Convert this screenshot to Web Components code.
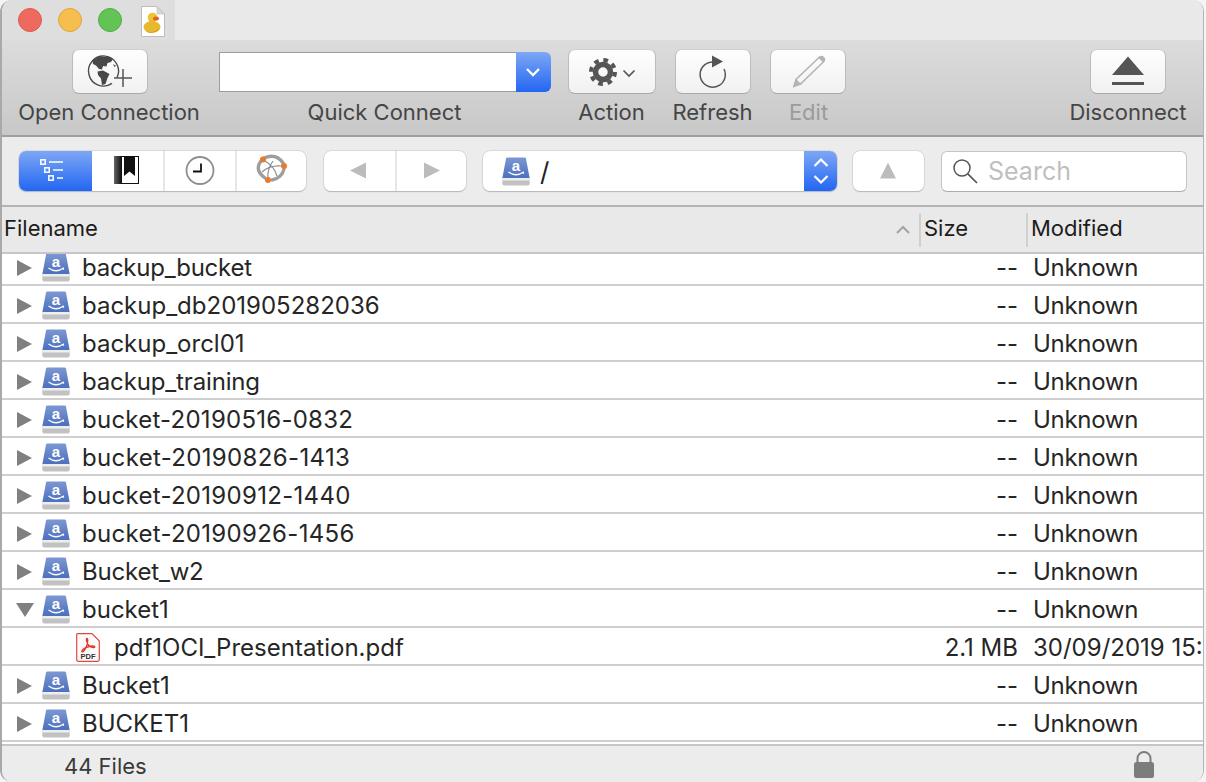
<!DOCTYPE html>
<html>
<head>
<meta charset="utf-8">
<title>Cyberduck</title>
<style>
  html, body { margin: 0; padding: 0; background: #f4f4f6; height: 100%; overflow: hidden; }
</style>
</head>
<body>
<app-window>
  <title-bar></title-bar>
  <tool-bar>
    <tool-item label="Open Connection" style="width:181px"><tool-button style="width:76px;margin-left:2px"><app-icon name="globe" size="76 44"></app-icon></tool-button></tool-item>
    <tool-item label="Quick Connect" style="width:332px;margin-left:19px"><quick-connect></quick-connect></tool-item>
    <tool-item label="Action" style="width:88px;margin-left:17px"><tool-button style="width:88px"><app-icon name="gear" size="88 44"></app-icon></tool-button></tool-item>
    <tool-item label="Refresh" style="width:80px;margin-left:17px"><tool-button style="width:76px"><app-icon name="refresh" size="76 44"></app-icon></tool-button></tool-item>
    <tool-item label="Edit" disabled style="width:76px;margin-left:18px"><tool-button style="width:76px;margin-left:-1px"><app-icon name="pencil" size="76 44"></app-icon></tool-button></tool-item>
    <tool-item label="Disconnect" style="width:118px;margin-left:auto"><tool-button style="width:76px"><app-icon name="eject" size="76 44"></app-icon></tool-button></tool-item>
  </tool-bar>
  <nav-bar>
    <seg-group style="width:287px">
      <seg-item active><app-icon name="list" size="73 39"></app-icon></seg-item>
      <seg-item nosep><app-icon name="bookmark" size="71 39"></app-icon></seg-item>
      <seg-item><app-icon name="clock" size="72 39"></app-icon></seg-item>
      <seg-item><app-icon name="bonjour" size="71 39"></app-icon></seg-item>
    </seg-group>
    <seg-group style="width:142px;margin-left:18px">
      <seg-item nosep><app-icon name="back" size="71 39"></app-icon></seg-item>
      <seg-item><app-icon name="forward" size="71 39"></app-icon></seg-item>
    </seg-group>
    <path-select style="margin-left:17px">/</path-select>
    <seg-group style="width:71px;margin-left:16px">
      <seg-item nosep><app-icon name="up" size="71 39"></app-icon></seg-item>
    </seg-group>
    <search-field style="margin-left:17px">Search</search-field>
  </nav-bar>
  <list-header></list-header>
  <file-list>
    <file-row clipped size="--" modified="Unknown" style="--track:-.25px">backup_bucket</file-row>
    <file-row size="--" modified="Unknown">backup_db201905282036</file-row>
    <file-row size="--" modified="Unknown">backup_orcl01</file-row>
    <file-row size="--" modified="Unknown" style="--track:-.15px">backup_training</file-row>
    <file-row size="--" modified="Unknown" style="--track:.25px">bucket-20190516-0832</file-row>
    <file-row size="--" modified="Unknown" style="--track:.35px">bucket-20190826-1413</file-row>
    <file-row size="--" modified="Unknown" style="--track:.3px">bucket-20190912-1440</file-row>
    <file-row size="--" modified="Unknown" style="--track:.3px">bucket-20190926-1456</file-row>
    <file-row size="--" modified="Unknown" style="--track:-.2px">Bucket_w2</file-row>
    <file-row size="--" modified="Unknown" open>bucket1</file-row>
    <file-row size="2.1 MB" modified="30/09/2019 15:17" kind="pdf">pdf1OCI_Presentation.pdf</file-row>
    <file-row size="--" modified="Unknown">Bucket1</file-row>
    <file-row size="--" modified="Unknown">BUCKET1</file-row>
  </file-list>
  <status-bar>44 Files</status-bar>
</app-window>

<script>
const FONT = `Inter, "Noto Sans", "Liberation Sans", sans-serif`;

// disk drawn at 28x29, shared by the rows and the path field
const diskSvg = `
  <svg width="28" height="29" viewBox="0 0 28 29">
    <defs><linearGradient id="dk" x1="0" y1="0" x2="0" y2="1">
      <stop offset="0" stop-color="#7d97d2"/><stop offset="1" stop-color="#4c70bd"/>
    </linearGradient></defs>
    <path d="M4 1.5Q4.200 .5 5.500 .5H22.500Q23.800 .5 24 1.500L27.600 21H.4Z" fill="url(#dk)"/>
    <path d="M.3 21H27.700V26.500Q27.700 28.500 25.700 28.500H2.300Q.3 28.500 .3 26.500Z" fill="#c2c2c2"/>
    <rect x=".3" y="21" width="27.400" height="2.500" fill="#eeeeee"/>
    <text x="14" y="13.500" text-anchor="middle" font-family="Liberation Sans" font-weight="bold" font-size="15" fill="#fff">a</text>
    <path d="M6.500 15Q14 20.500 21.500 15" fill="none" stroke="#fff" stroke-width="1.300"/>
    <path d="M21.800 14.200L22.200 17L19.800 16Z" fill="#fff"/>
  </svg>`;

const pdfSvg = `
  <svg width="24" height="29" viewBox="0 0 24 29">
    <path d="M1.500 .7H16L23.300 8V26.500Q23.300 28.300 21.500 28.300H2.500Q.7 28.300 .7 26.500V1.500Q.7 .7 1.500 .7Z" fill="#fafafa" stroke="#e5473c" stroke-width="1.200"/>
    <path d="M11 5.500C9.800 5.500 10.500 9.500 12.800 12.500C14.200 14.400 18.600 15.300 18.800 13.900C19 12.500 14 12.800 10.500 14.300C7.500 15.500 5 18 6 18.800C7.200 19.600 9.800 15.500 11 12C11.900 9.300 12 5.500 11 5.500Z" fill="none" stroke="#e5352b" stroke-width="1.300"/>
    <text x="12" y="26" text-anchor="middle" font-family="Liberation Sans" font-weight="bold" font-size="7.500" fill="#333">PDF</text>
  </svg>`;

// toolbar and navigation glyphs, each viewBox is the button box
const ICONS = {
  globe: `
    <path d="M40 34.400A15 15 0 1 1 45 28.600" fill="none" stroke="#4a4a4a" stroke-width="1.400"/>
    <path d="M20.500 11L27 8L38 8L41 10L39 13L35.500 14L34.500 17.500L31 17L30 20.500L27 20L24 16.500L21 15Z" fill="#484848"/>
    <path d="M25.500 22.500L31 21.500L37.500 25L35.500 29L33.500 35L30 36L29 29.500L26 26Z" fill="#484848"/>
    <path d="M41 15L44 16.500L42.500 18.500Z" fill="#6a6a6a"/>
    <path d="M51 20V38M42 29H60" stroke="#555" stroke-width="1.500" fill="none"/>`,
  gear: `
    <circle cx="35" cy="23" r="12" fill="none" stroke="#555" stroke-width="4" stroke-dasharray="4.700 4.725"/>
    <circle cx="35" cy="23" r="7.500" fill="none" stroke="#555" stroke-width="5.500"/>
    <path d="M55.500 21.500L61 27L66.500 21.500" fill="none" stroke="#555" stroke-width="1.700"/>`,
  refresh: `
    <path d="M37 13A12.600 12.600 0 1 0 49 20" fill="none" stroke="#555" stroke-width="1.500"/>
    <path d="M37 6.500L48 12.500L37 18.500Z" fill="#555"/>`,
  pencil: `
    <path d="M24 37.500L26.500 30L49 8.500Q51.500 6.500 53.500 8.500Q55.500 10.500 53.500 12.800L31 34.500Z" fill="none" stroke="#b4b4b4" stroke-width="1.500"/>
    <path d="M23 38L25.500 29.500L31.500 35.500Z" fill="#b4b4b4"/>
    <path d="M48.500 9Q51.500 6 53.800 8.200Q56 10.500 53.200 13.500Z" fill="#b4b4b4"/>`,
  eject: `
    <path d="M22 26L38 7.500L54 26Z" fill="#555"/>
    <rect x="22" y="33" width="32" height="3" fill="#555"/>`,
  list: `
    <g fill="none" stroke="#fff" stroke-width="1.500"><rect x="21.800" y="8.800" width="4.400" height="4.400"/><rect x="25.800" y="16.800" width="4.400" height="4.400"/><rect x="29.800" y="24.800" width="4.400" height="4.400"/></g>
    <path d="M30 11H44M34 19H44M38 27H44" stroke="#fff" stroke-width="1.700"/>`,
  bookmark: `
    <defs><linearGradient id="bm"><stop offset="0" stop-color="#666"/><stop offset=".3" stop-color="#111"/></linearGradient></defs>
    <rect x="22" y="5" width="25" height="28" fill="url(#bm)"/>
    <rect x="30" y="6" width="16" height="26" fill="#fff"/>
    <path d="M32 5H43V25L37.500 20.500L32 25Z" fill="#111"/>`,
  clock: `
    <circle cx="37" cy="19.500" r="13.500" fill="#fff" stroke="#8f8f8f" stroke-width="1.800"/>
    <path d="M38 12.500V20.500H30" fill="none" stroke="#111" stroke-width="1.800"/>`,
  bonjour: `
    <g fill="none" stroke="#9e9e9e" stroke-width="3.400" stroke-linecap="round">
      <path d="M29 7Q41 2 48 12"/>
      <path d="M49 18Q47 27 37 29"/>
      <path d="M30 27Q19 19 26 10"/>
    </g>
    <g fill="none" stroke="#8c8c8c" stroke-width="1.200">
      <path d="M30 10Q39 15 42 25"/>
      <path d="M46 15Q35 14 27 21"/>
      <path d="M33 27Q32 18 38 10"/>
    </g>
    <circle cx="28" cy="8.500" r="3" fill="#ea7a2e"/>
    <circle cx="49" cy="15" r="3" fill="#ea7a2e"/>
    <circle cx="33" cy="29" r="3" fill="#ea7a2e"/>`,
  back: `<path d="M26 19.500L42 11.500V27.500Z" fill="#bcbcbc"/>`,
  forward: `<path d="M29 11.500L45 19.500L29 27.500Z" fill="#bcbcbc"/>`,
  up: `<path d="M27 27.500L35 11.500L43 27.500Z" fill="#bcbcbc"/>`
};

class AppIcon extends HTMLElement {
  connectedCallback() {
    const [w, h] = this.getAttribute('size').split(' ');
    const root = this.shadowRoot || this.attachShadow({ mode: 'open' });
    root.innerHTML = `
      <style>:host { display: block; width: ${w}px; height: ${h}px; } svg { display: block; }</style>
      <svg width="${w}" height="${h}" viewBox="0 0 ${w} ${h}">${ICONS[this.getAttribute('name')]}</svg>`;
  }
}

class AppWindow extends HTMLElement {
  constructor() {
    super();
    this.attachShadow({ mode: 'open' }).innerHTML = `
      <style>
        :host {
          display: flex; flex-direction: column; box-sizing: border-box;
          width: 1204px; height: 782px; overflow: hidden;
          background: #fff; border-left: 2px solid #a9a9a9; border-right: 1px solid #b4b4b4;
          border-radius: 12px;
          font-family: ${FONT};
        }
      </style>
      <slot></slot>`;
  }
}

class TitleBar extends HTMLElement {
  constructor() {
    super();
    this.attachShadow({ mode: 'open' }).innerHTML = `
      <style>
        :host { display: flex; height: 40px; flex: none; background: #e9e9e9; }
        .tab { width: 173px; display: flex; align-items: center; background: #dedede; padding-left: 16px; box-sizing: border-box; }
        .light { width: 24px; height: 24px; border-radius: 50%; box-sizing: border-box; margin-right: 16px; }
        .red { background: #ee6a5f; border: 1px solid #dc5a50; }
        .yellow { background: #f6bd4f; border: 1px solid #dfa53d; }
        .green { background: #61c454; border: 1px solid #50ad44; }
        svg { display: block; margin-left: 3px; align-self: flex-start; margin-top: 6px; }
      </style>
      <div class="tab">
        <div class="light red"></div><div class="light yellow"></div><div class="light green"></div>
        <svg width="24" height="31" viewBox="0 0 24 31">
          <path d="M.5 .5H16L23.500 8V30.500H.5Z" fill="#fff" stroke="#bdbdbd"/>
          <path d="M16 .5V8H23.500Z" fill="#d8d8d8" stroke="#bdbdbd" stroke-width=".6"/>
          <ellipse cx="11" cy="21" rx="8.500" ry="6" fill="#e8b92e"/>
          <path d="M4 24.500Q11 29 19 22Q15 27.500 7 26.500Z" fill="#b98a1a"/>
          <circle cx="11.500" cy="11.500" r="4.800" fill="#efc433"/>
          <rect x="8" y="14" width="6" height="5" fill="#e8b92e"/>
          <ellipse cx="15" cy="12.500" rx="3" ry="2" fill="#e2632a"/>
        </svg>
      </div>`;
  }
}

class ToolBar extends HTMLElement {
  constructor() {
    super();
    this.attachShadow({ mode: 'open' }).innerHTML = `
      <style>
        :host {
          display: flex; flex: none; height: 97px; box-sizing: border-box;
          padding: 9px 16px 0 16.500px;
          background: linear-gradient(#dcdcdc, #c8c8c8);
          border-bottom: 2px solid #9f9f9f;
        }
      </style>
      <slot></slot>`;
  }
}

class ToolItem extends HTMLElement {
  connectedCallback() {
    const off = this.hasAttribute('disabled');
    this.attachShadow({ mode: 'open' }).innerHTML = `
      <style>
        :host { display: flex; flex-direction: column; align-items: center; flex: none; }
        .box { height: 45px; display: flex; align-items: center; }
        .label { margin-top: 4px; font-size: 22px; line-height: 28px; white-space: nowrap; color: ${off ? '#9b9b9b' : '#454545'}; }
      </style>
      <div class="box"><slot></slot></div>
      <div class="label">${this.getAttribute('label')}</div>`;
  }
}

class ToolButton extends HTMLElement {
  constructor() {
    super();
    this.attachShadow({ mode: 'open' }).innerHTML = `
      <style>
        :host {
          display: block; height: 45px; box-sizing: border-box;
          background: linear-gradient(#fefefe, #f1f1f1);
          border-radius: 7px; border: 1px solid #bcbcbc; border-top-color: #cfcfcf; border-bottom-color: #a9a9a9;
        }
        ::slotted(app-icon) { margin: -1px; }
      </style>
      <slot></slot>`;
  }
}

class QuickConnect extends HTMLElement {
  constructor() {
    super();
    this.attachShadow({ mode: 'open' }).innerHTML = `
      <style>
        :host { display: flex; width: 332px; height: 40px; }
        .field { flex: 1; background: #fff; border: 1px solid #9c9c9c; border-right: 0; }
        .drop { width: 35px; background: linear-gradient(#7ea7f5, #2266f2); border-radius: 0 6px 6px 0; display: flex; align-items: center; justify-content: center; }
      </style>
      <div class="field"></div>
      <div class="drop"><svg width="16" height="10" viewBox="0 0 16 10"><path d="M2 2L8 8L14 2" fill="none" stroke="#fff" stroke-width="2.300"/></svg></div>`;
  }
}

class NavBar extends HTMLElement {
  constructor() {
    super();
    this.attachShadow({ mode: 'open' }).innerHTML = `
      <style>
        :host {
          display: flex; align-items: center; flex: none; height: 70px; box-sizing: border-box;
          padding: 0 16px 0 17px; background: #ececec; border-bottom: 2px solid #b4b4b4;
        }
      </style>
      <slot></slot>`;
  }
}

class SegGroup extends HTMLElement {
  constructor() {
    super();
    this.attachShadow({ mode: 'open' }).innerHTML = `
      <style>
        :host {
          display: flex; flex: none; height: 40px; box-sizing: border-box; overflow: hidden;
          background: #fff; border-radius: 7px;
          box-shadow: 0 0 0 .5px #c6c6c6, 0 1px 1px #aaa;
        }
      </style>
      <slot></slot>`;
  }
}

class SegItem extends HTMLElement {
  constructor() {
    super();
    this.attachShadow({ mode: 'open' }).innerHTML = `
      <style>
        :host { display: block; height: 40px; flex: none; box-shadow: inset 2px 0 #e6e6e6; }
        :host([nosep]) { box-shadow: none; }
        :host([active]) { box-shadow: none; background: linear-gradient(#7ea7f5, #2266f2); }
      </style>
      <slot></slot>`;
  }
}

class PathSelect extends HTMLElement {
  constructor() {
    super();
    this.attachShadow({ mode: 'open' }).innerHTML = `
      <style>
        :host {
          display: flex; align-items: center; flex: none; width: 354px; height: 40px; box-sizing: border-box;
          background: #fff; border-radius: 7px; overflow: hidden;
          box-shadow: 0 0 0 .5px #c6c6c6, 0 1px 1px #aaa;
        }
        .disk { margin-left: 19px; height: 29px; }
        .text { flex: 1; margin-left: 10px; font-size: 26px; color: #222; }
        .step { width: 33px; height: 40px; background: linear-gradient(#7ea7f5, #2266f2); display: flex; align-items: center; justify-content: center; }
      </style>
      <div class="disk">${diskSvg}</div>
      <div class="text"><slot></slot></div>
      <div class="step"><svg width="18" height="30" viewBox="0 0 18 30"><path d="M2.500 10L9 3.500L15.500 10M2.500 20L9 26.500L15.500 20" fill="none" stroke="#fff" stroke-width="2.200"/></svg></div>`;
  }
}

class SearchField extends HTMLElement {
  constructor() {
    super();
    this.attachShadow({ mode: 'open' }).innerHTML = `
      <style>
        :host {
          display: flex; align-items: center; flex: none; width: 246px; height: 41px; box-sizing: border-box;
          background: #fff; border-radius: 6px; border: 1px solid #c4c4c4; border-bottom-color: #adadad;
          color: #bfbfbf; font-size: 25px;
        }
        svg { margin-left: 10px; margin-right: 10px; display: block; }
      </style>
      <svg width="26" height="26" viewBox="0 0 26 26"><circle cx="10" cy="10" r="8" fill="none" stroke="#555" stroke-width="1.500"/><path d="M15.800 15.800L25 25" stroke="#555" stroke-width="1.700"/></svg>
      <slot></slot>`;
  }
}

class ListHeader extends HTMLElement {
  constructor() {
    super();
    this.attachShadow({ mode: 'open' }).innerHTML = `
      <style>
        :host {
          display: flex; align-items: center; flex: none; height: 47px; box-sizing: border-box;
          background: #e9e9e9; border-bottom: 2px solid #c6c6c6; font-size: 22px; color: #1c1c1c;
        }
        .name { flex: 1; padding-left: 2px; display: flex; align-items: center; justify-content: space-between; padding-right: 8px; }
        .name span { margin-top: -3px; }
        .size { width: 107px; box-sizing: border-box; padding-left: 3px; border-left: 2px solid #d0d0d0; height: 34px; line-height: 31px; }
        .date { width: 177px; box-sizing: border-box; padding-left: 3px; border-left: 2px solid #d0d0d0; height: 34px; line-height: 31px; }
      </style>
      <div class="name"><span>Filename</span><svg width="16" height="10" viewBox="0 0 16 10"><path d="M2 8L8 2L14 8" fill="none" stroke="#a3a3a3" stroke-width="2"/></svg></div>
      <div class="size">Size</div>
      <div class="date">Modified</div>`;
  }
}

class FileList extends HTMLElement {
  constructor() {
    super();
    this.attachShadow({ mode: 'open' }).innerHTML = `
      <style>
        :host { display: block; flex: 1; min-height: 0; overflow: hidden; background: #fff; }
      </style>
      <slot></slot>`;
  }
}

class FileRow extends HTMLElement {
  connectedCallback() {
    const pdf = this.getAttribute('kind') === 'pdf';
    const open = this.hasAttribute('open');
    const unknown = this.getAttribute('modified') === 'Unknown';
    const arrow = pdf ? '' : open
      ? `<svg width="18" height="14" viewBox="0 0 18 14"><path d="M0 0H18L9 14Z" fill="#808080"/></svg>`
      : `<svg width="15" height="16" viewBox="0 0 15 16"><path d="M0 0L15 8L0 16Z" fill="#808080"/></svg>`;
    this.attachShadow({ mode: 'open' }).innerHTML = `
      <style>
        :host {
          display: flex; align-items: center; height: 38px; box-sizing: border-box; padding-top: 3px;
          border-bottom: 2px solid #cfcfcf; color: #262626; font-size: 24px; white-space: nowrap;
        }
        :host([clipped]) { height: 32px; padding: 0 0 3px; }
        .tree { width: 40px; flex: none; display: flex; justify-content: center; padding-left: 5px; box-sizing: border-box; }
        .name { flex: 1; min-width: 0; margin-left: 12px; letter-spacing: var(--track, 0); }
        .icon { height: 29px; flex: none; margin-left: ${pdf ? '34px' : '0'}; }
        .size { width: 100px; text-align: right; flex: none; }
        .date { width: 170px; margin-left: 15px; overflow: hidden; flex: none; letter-spacing: ${unknown ? '-.3px' : '0'}; }
      </style>
      <div class="tree">${arrow}</div>
      <div class="icon">${pdf ? pdfSvg : diskSvg}</div>
      <div class="name" style="${pdf ? 'margin-left:14px' : ''}"><slot></slot></div>
      <div class="size">${this.getAttribute('size')}</div>
      <div class="date">${this.getAttribute('modified')}</div>`;
  }
}

class StatusBar extends HTMLElement {
  constructor() {
    super();
    this.attachShadow({ mode: 'open' }).innerHTML = `
      <style>
        :host {
          display: flex; align-items: center; justify-content: space-between; flex: none; height: 38px; box-sizing: border-box;
          background: #ececec; border-top: 2px solid #c6c6c6; padding: 4px 48px 0 62px; font-size: 22px; color: #3a3a3a;
        }
        svg { margin-top: -2px; }
      </style>
      <span><slot></slot></span>
      <svg width="22" height="30" viewBox="0 0 22 30"><path d="M4.500 13V8.500A6.500 6.500 0 0 1 17.500 8.500V13" fill="none" stroke="#7c7c7c" stroke-width="2"/><rect x="1" y="12" width="20" height="16" rx="2.500" fill="#7c7c7c"/></svg>`;
  }
}

customElements.define('app-icon', AppIcon);
customElements.define('app-window', AppWindow);
customElements.define('title-bar', TitleBar);
customElements.define('tool-bar', ToolBar);
customElements.define('tool-item', ToolItem);
customElements.define('tool-button', ToolButton);
customElements.define('quick-connect', QuickConnect);
customElements.define('nav-bar', NavBar);
customElements.define('seg-group', SegGroup);
customElements.define('seg-item', SegItem);
customElements.define('path-select', PathSelect);
customElements.define('search-field', SearchField);
customElements.define('list-header', ListHeader);
customElements.define('file-list', FileList);
customElements.define('file-row', FileRow);
customElements.define('status-bar', StatusBar);
</script>
</body>
</html>
